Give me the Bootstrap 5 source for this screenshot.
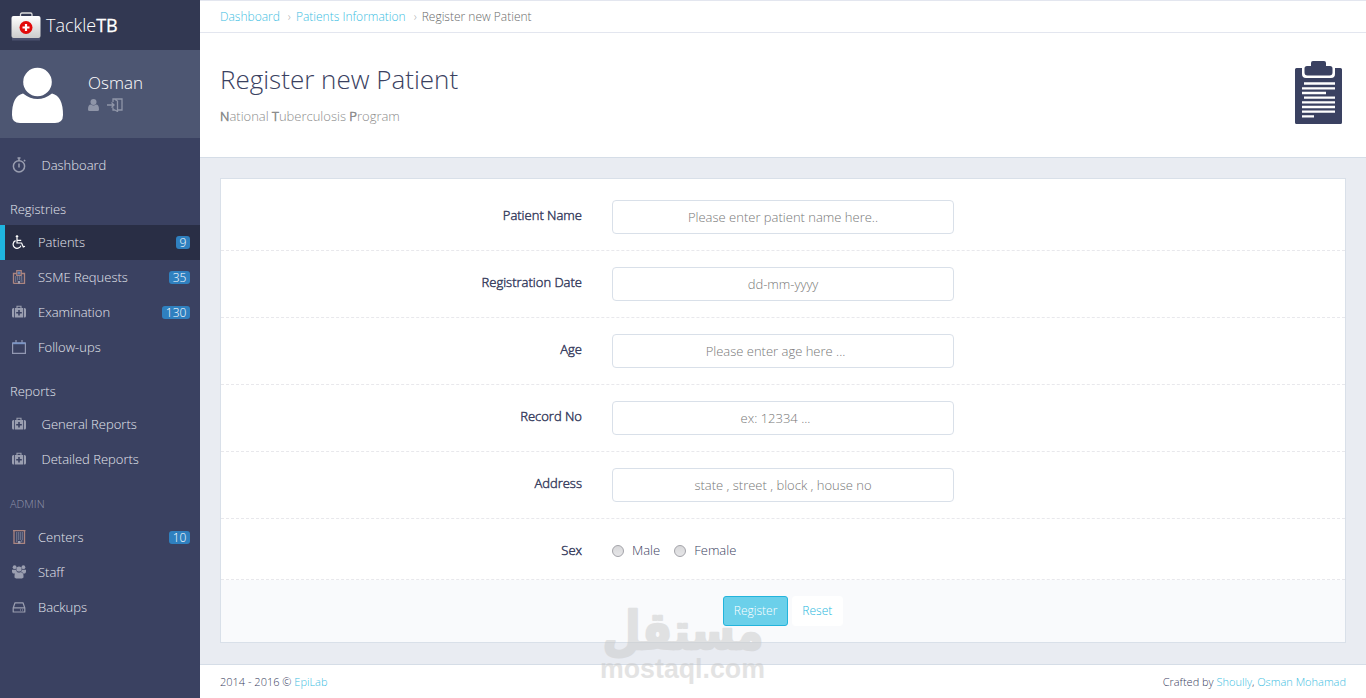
<!DOCTYPE html>
<html lang="en">
<head>
  <meta charset="UTF-8">
  <meta name="viewport" content="width=device-width, initial-scale=1.0">
  <title>TackleTB - Register new Patient</title>
  <link href="https://cdn.jsdelivr.net/npm/bootstrap@5.3.0/dist/css/bootstrap.min.css" rel="stylesheet">
  <style>
    body {
      font-family: "Open Sans", sans-serif;
      font-size: 13px;
      font-weight: 300;
      line-height: 20px;
      color: #3a4161;
      background-color: #e9ecf2;
    }
    a {
      color: #3dbee2;
      text-decoration: none;
    }
    /* Sidebar */
    .side {
      width: 200px;
      background-color: #3a4161;
      color: #e4e6ee;
    }
    .side-brand {
      height: 50px;
      padding-left: 10px;
      background-color: #323852;
      color: #fff;
      font-size: 18px;
    }
    .side-brand b {
      font-weight: 400;
      -webkit-text-stroke: .3px;
    }
    .side-user {
      height: 88px;
      padding: 17px 0 0 12px;
      background-color: #4d5672;
    }
    .side-user-info {
      padding: 5px 0 0 25px;
    }
    .side-user-name {
      font-size: 17px;
      line-height: 22px;
      color: #fff;
    }
    .side-user-links {
      gap: 7px;
      padding-top: 4px;
    }
    .side .nav {
      padding-top: 10px;
    }
    .side .nav-link {
      height: 35px;
      padding: 0 10px 2px 12px;
      color: #e4e6ee;
    }
    .side .nav-link svg {
      width: 14px;
      height: 14px;
      margin-right: 12px;
      color: #9a9eb0;
      flex-shrink: 0;
    }
    .side .nav-link.wide svg {
      margin-right: 15.5px;
    }
    .side .nav-link .watch {
      height: 16px;
    }
    .side .nav-link.active {
      background-color: #292e45;
      border-left: 5px solid #1fb5e0;
      padding-left: 7px;
    }
    .side .nav-link.active svg {
      color: #fff;
    }
    .side-title {
      height: 42px;
      padding: 16px 10px 0;
    }
    .side-title.muted {
      height: 43px;
      padding-top: 17px;
      font-size: 11px;
      color: #9297ad;
    }
    .side .badge {
      margin-top: 2px;
      padding: 1px 3.6px 0;
      font-size: 12px;
      line-height: 12px;
      font-weight: 300;
      border-radius: 3px;
      background-color: #2f80bf;
    }
    /* Content */
    .crumbs {
      height: 33px;
      padding: 1px 20px 0;
      font-size: 12px;
      border-top: 1px solid #e3e6ef;
      border-bottom: 1px solid #e3e6ef;
    }
    .crumbs .breadcrumb-item {
      padding-left: 0;
      color: #6a6a6a;
    }
    .crumbs .breadcrumb-item + .breadcrumb-item::before {
      content: "›";
      color: #aaa;
      padding: 0 5px 0 8px;
    }
    .page-top {
      height: 125px;
      padding: 28px 23px 0 20px;
      border-bottom: 1px solid #d5dde7;
    }
    .page-top h1 {
      margin: 0;
      font-size: 26px;
      line-height: 36px;
      font-weight: 300;
    }
    .page-top p {
      margin: 9px 0 0;
      color: #8c8c8c;
    }
    .page-top b {
      font-weight: 300;
      -webkit-text-stroke: .6px;
    }
    .form-panel {
      margin: 20px 20px 21px;
      border: 1px solid #d9e0e9;
      padding-top: 5px;
    }
    .form-line {
      padding: 16px 4px;
      border-bottom: 1px dashed #e8e8ec;
    }
    .form-line .row {
      --bs-gutter-x: 30px;
      margin: 0;
    }
    .form-line .col-form-label {
      padding-top: 6px;
      padding-bottom: 0;
      font-weight: 300;
      -webkit-text-stroke: .45px;
    }
    .form-line .form-control {
      height: 34px;
      padding: 6px 12px;
      font-size: 13px;
      font-weight: 300;
      text-align: center;
      border: 1px solid #d9e0e9;
      border-radius: 4px;
    }
    .form-line .form-control::placeholder {
      color: #777;
    }
    .sex-line {
      height: 61px;
    }
    .sex-choice {
      gap: 14px;
      padding-top: 5px;
    }
    .sex-line .radio-dot {
      appearance: none;
      width: 12px;
      height: 12px;
      margin: 1px 8px 0 0;
      border: 1px solid #a3a3a9;
      border-radius: 50%;
      background: linear-gradient(#d8d8da, #e6e6e8);
    }
    .form-buttons {
      height: 62px;
      padding-top: 16px;
      background-color: #f9fafc;
    }
    .form-buttons .btn {
      height: 30px;
      padding: 0 9.5px;
      font-size: 12px;
      font-weight: 300;
      border-radius: 3px;
    }
    .btn-register {
      color: #fff;
      background-color: #6bd0ea;
      border-color: #23b4dc;
    }
    .btn-clear {
      color: #29b8de;
      background-color: #fff;
      border-color: #fff;
    }
    .page-foot {
      height: 34px;
      padding: 0 20px;
      font-size: 11px;
      border-top: 1px solid #d5dde7;
    }
    .stamp {
      position: absolute;
      left: 596px;
      top: 590px;
      pointer-events: none;
    }
  </style>
</head>
<body>

  <!-- Icon shapes -->
  <svg class="d-none">
    <symbol id="i-watch" viewBox="0 0 14 16">
      <g fill="none" stroke="currentColor" stroke-width="1.5"><circle cx="7" cy="9.300" r="5.600"/><path d="M7 6.500v4M7 4V1.500M5.500 1h3M12 3l1.200 1.200"/></g>
    </symbol>
    <symbol id="i-chair" viewBox="0 0 14 14">
      <circle cx="5" cy="1.5" r="1.3" fill="currentColor"/>
      <path d="M5 3v5h4.6l1.7 4 1.7-.7M5.2 5.4h4M3.6 5.6a4 4 0 1 0 5.3 5" fill="none" stroke="currentColor" stroke-width="1.2"/>
    </symbol>
    <symbol id="i-hospital" viewBox="0 0 14 14">
      <path d="M1.500 13.500v-10h3.300M9.200 3.500h3.300v10h-11M4.800.6h4.400v4.800H4.800z" fill="none" stroke="#ab8580" stroke-width="1.300"/>
      <path d="M7 1.500v3M5.500 3h3" stroke="#6f9ad0"/>
      <path d="M3 7h8M3 9h8M3 11h2.500M8.500 11H11" stroke="currentColor" stroke-width="1.200" stroke-dasharray="1.300 .7"/>
      <path d="M6 11h2v2.500H6z" fill="currentColor"/>
    </symbol>
    <symbol id="i-medkit" viewBox="0 0 14 14">
      <path d="M5 3.2V1.2h4v2" fill="none" stroke="currentColor" stroke-width="1.1"/>
      <path d="M2 3v9.500H1.500A1.500 1.500 0 0 1 0 11V4.500A1.500 1.500 0 0 1 1.500 3zM12 3v9.500h.5A1.500 1.500 0 0 0 14 11V4.500A1.500 1.500 0 0 0 12.500 3z" fill="currentColor"/>
      <path fill-rule="evenodd" d="M2.800 3h8.400v9.500H2.800zM6.200 5v1.900H4.200v1.600h2v1.900h1.600V8.500h2V6.900h-2V5z" fill="currentColor"/>
    </symbol>
    <symbol id="i-calendar" viewBox="0 0 14 14">
      <path d="M.6 3h12.800v10.400H.6zM4 0v3M10 0v3" fill="none" stroke="#9298b2" stroke-width="1.200"/>
      <path d="M.6 2.300h12.800v1.900H.6z" fill="#7a94c4"/>
    </symbol>
    <symbol id="i-building" viewBox="0 0 14 14">
      <path d="M2 .5h10.500v13H2zM1 .5h12.500" fill="none" stroke="#ab8580" stroke-width="1.300"/>
      <path d="M4 3h7M4 5h7M4 7h7M4 9h7M4 11h2M9 11h2" stroke="currentColor" stroke-width="1.200" stroke-dasharray="1.300 .7"/>
      <path d="M6 11h2.500v2.500H6z" fill="currentColor"/>
    </symbol>
    <symbol id="i-users" viewBox="0 0 14 14">
      <g fill="currentColor"><circle cx="2.600" cy="2.200" r="1.900"/><circle cx="11.400" cy="2.200" r="1.900"/><circle cx="7" cy="4" r="2.600"/><path d="M0 4.800h4L5 7 3 8.500H1Q-.3 8 0 4.800zM14 4.800h-4L9 7l2 1.500h2q1.300-.5 1-3.700zM2.500 11q0-4 2.300-4.300Q7 8.500 9.200 6.700 11.500 7 11.500 11v1.500l-1.500 1H4l-1.500-1z"/></g>
    </symbol>
    <symbol id="i-drive" viewBox="0 0 14 14">
      <path d="M1.200 8 3 2.800h8L12.800 8v4H1.200zM1.200 7.800h11.600M8 10h1M10 10h1" fill="none" stroke="currentColor" stroke-width="1.200" stroke-linejoin="round"/>
    </symbol>
  </svg>

  <div class="d-flex vh-100">
    <!-- Sidebar -->
    <aside class="side flex-shrink-0">
      <div class="side-brand d-flex align-items-center">
        <svg width="32" height="32" viewBox="0 0 32 32">
          <defs><linearGradient id="case" x2="0" y2="1"><stop offset="0" stop-color="#fff"/><stop offset="1" stop-color="#ccc"/></linearGradient></defs>
          <path d="M10.500 7V5.500q0-1.500 1.500-1.500h8.500Q22 4 22 5.500v1.500" fill="none" stroke="#ddd" stroke-width="1.300"/>
          <rect x="2" y="29" width="28" height="2.500" fill="#4b516e"/>
          <rect x="1.500" y="7" width="29" height="22" rx="2" fill="url(#case)"/>
          <circle cx="16" cy="18.500" r="6.500" fill="#e20a0a"/>
          <path d="M16 15v7M12.500 18.500h7" stroke="#fff" stroke-width="2.200"/>
        </svg>
        <span class="ms-1">Tackle<b>TB</b></span>
      </div>
      <div class="side-user d-flex">
        <svg width="51" height="57" viewBox="0 0 51 57">
          <path d="M11 26.500Q25.500 37.500 40 26.500 51 29 51 48q0 8-8 8H8q-8 0-8-8 0-19 11-21.500z" fill="#fff"/>
          <circle cx="25.500" cy="15" r="14.300" fill="#fff"/>
        </svg>
        <div class="side-user-info">
          <div class="side-user-name">Osman</div>
          <div class="side-user-links d-flex">
            <svg width="12" height="14" viewBox="0 0 12 14" fill="#8f95a8"><circle cx="5.500" cy="4" r="3"/><path d="M0 11.500Q0 6.500 3 6.500q2.500 2 5 0 3 0 3 5 0 1.500-1.500 1.500h-8Q0 13 0 11.500z"/></svg>
            <svg width="16" height="14" viewBox="0 0 16 14" fill="none" stroke="#8f95a8" stroke-width="1.300"><path d="M6 4V1h9v11h-4M6 9.500V12h2M8 1.500l2.500 1.500v10.500L8 12M0 7h7M4.500 4.500 7 7 4.500 9.500"/></svg>
          </div>
        </div>
      </div>
      <nav class="nav flex-column flex-nowrap">
        <a class="nav-link wide d-flex align-items-center" href="#"><svg class="watch"><use href="#i-watch"/></svg>Dashboard</a>
        <div class="side-title">Registries</div>
        <a class="nav-link active d-flex align-items-center" href="#"><svg><use href="#i-chair"/></svg>Patients<span class="badge ms-auto">9</span></a>
        <a class="nav-link d-flex align-items-center" href="#"><svg><use href="#i-hospital"/></svg>SSME Requests<span class="badge ms-auto">35</span></a>
        <a class="nav-link d-flex align-items-center" href="#"><svg><use href="#i-medkit"/></svg>Examination<span class="badge ms-auto">130</span></a>
        <a class="nav-link d-flex align-items-center" href="#"><svg><use href="#i-calendar"/></svg>Follow-ups</a>
        <div class="side-title">Reports</div>
        <a class="nav-link wide d-flex align-items-center" href="#"><svg><use href="#i-medkit"/></svg>General Reports</a>
        <a class="nav-link wide d-flex align-items-center" href="#"><svg><use href="#i-medkit"/></svg>Detailed Reports</a>
        <div class="side-title muted">ADMIN</div>
        <a class="nav-link d-flex align-items-center" href="#"><svg><use href="#i-building"/></svg>Centers<span class="badge ms-auto">10</span></a>
        <a class="nav-link d-flex align-items-center" href="#"><svg><use href="#i-users"/></svg>Staff</a>
        <a class="nav-link d-flex align-items-center" href="#"><svg><use href="#i-drive"/></svg>Backups</a>
      </nav>
    </aside>

    <!-- Main Content -->
    <main class="flex-grow-1 d-flex flex-column">
      <nav class="crumbs bg-white d-flex align-items-center">
        <ol class="breadcrumb mb-0">
          <li class="breadcrumb-item"><a href="#">Dashboard</a></li>
          <li class="breadcrumb-item"><a href="#">Patients Information</a></li>
          <li class="breadcrumb-item">Register new Patient</li>
        </ol>
      </nav>
      <header class="page-top bg-white d-flex justify-content-between">
        <div>
          <h1>Register new Patient</h1>
          <p><b>N</b>ational <b>T</b>uberculosis <b>P</b>rogram</p>
        </div>
        <svg width="49" height="64" viewBox="0 0 49 64">
          <path d="M1 8.500q0-1.500 1.500-1.500H8v6q0 4 4 4h25q4 0 4-4V7h5.500Q48 7 48 8.500v53q0 1.500-1.500 1.500h-44Q1 63 1 61.500z" fill="#3a4161"/>
          <path d="M17 5V2q0-2 2-2h11q2 0 2 2v3h4q2.500 0 2.500 2.500v4q0 3-3 3h-22q-3 0-3-3v-4Q10.500 5 13 5z" fill="#3a4161"/>
          <path d="M10 22.500h31M8 27.300h33M8 32h24M10 36.700h31M8 41.300h33M8 46h33M8 50.700h33M8 55.300h12" stroke="#fff" stroke-width="2.300"/>
        </svg>
      </header>

      <form class="form-panel bg-white">
        <div class="form-line">
          <div class="row">
            <label class="col-4 col-form-label text-end" for="pname">Patient Name</label>
            <div class="col-4"><input type="text" class="form-control" id="pname" placeholder="Please enter patient name here.."></div>
          </div>
        </div>
        <div class="form-line">
          <div class="row">
            <label class="col-4 col-form-label text-end" for="regdate">Registration Date</label>
            <div class="col-4"><input type="text" class="form-control" id="regdate" placeholder="dd-mm-yyyy"></div>
          </div>
        </div>
        <div class="form-line">
          <div class="row">
            <label class="col-4 col-form-label text-end" for="age">Age</label>
            <div class="col-4"><input type="number" class="form-control" id="age" placeholder="Please enter age here ..."></div>
          </div>
        </div>
        <div class="form-line">
          <div class="row">
            <label class="col-4 col-form-label text-end" for="record">Record No</label>
            <div class="col-4"><input type="number" class="form-control" id="record" placeholder="ex: 12334 ..."></div>
          </div>
        </div>
        <div class="form-line">
          <div class="row">
            <label class="col-4 col-form-label text-end" for="address">Address</label>
            <div class="col-4"><input type="text" class="form-control" id="address" placeholder="state , street , block , house no"></div>
          </div>
        </div>
        <div class="form-line sex-line">
          <div class="row">
            <span class="col-4 col-form-label text-end">Sex</span>
            <div class="col-4 sex-choice d-flex">
              <label class="d-flex align-items-center"><input class="radio-dot" type="radio" name="sex">Male</label>
              <label class="d-flex align-items-center"><input class="radio-dot" type="radio" name="sex">Female</label>
            </div>
          </div>
        </div>
        <div class="form-buttons d-flex justify-content-center gap-1">
          <button type="submit" class="btn btn-register">Register</button>
          <button type="reset" class="btn btn-clear">Reset</button>
        </div>
      </form>

      <!-- Footer -->
      <footer class="page-foot bg-white d-flex justify-content-between align-items-center mt-auto">
        <span>2014 - 2016 © <a href="#">EpiLab</a></span>
        <span>Crafted by <a href="#">Shoully</a>, <a href="#">Osman Mohamad</a></span>
      </footer>
    </main>
  </div>

  <svg class="stamp" width="176" height="106" viewBox="0 0 176 106" opacity=".5">
    <text x="87" y="59" text-anchor="middle" direction="rtl" font-family="DejaVu Sans, sans-serif" font-weight="700" font-size="52" textLength="161" lengthAdjust="spacingAndGlyphs" fill="#c9c9c9" stroke="#c9c9c9" stroke-width="2.500" stroke-linejoin="round">مستقل</text>
    <text x="4" y="88" font-family="Liberation Sans, sans-serif" font-weight="700" font-size="27" textLength="165" lengthAdjust="spacingAndGlyphs" fill="#c9c9c9">mostaql.com</text>
  </svg>

  <script src="https://cdn.jsdelivr.net/npm/bootstrap@5.3.0/dist/js/bootstrap.bundle.min.js"></script>
</body>
</html>
